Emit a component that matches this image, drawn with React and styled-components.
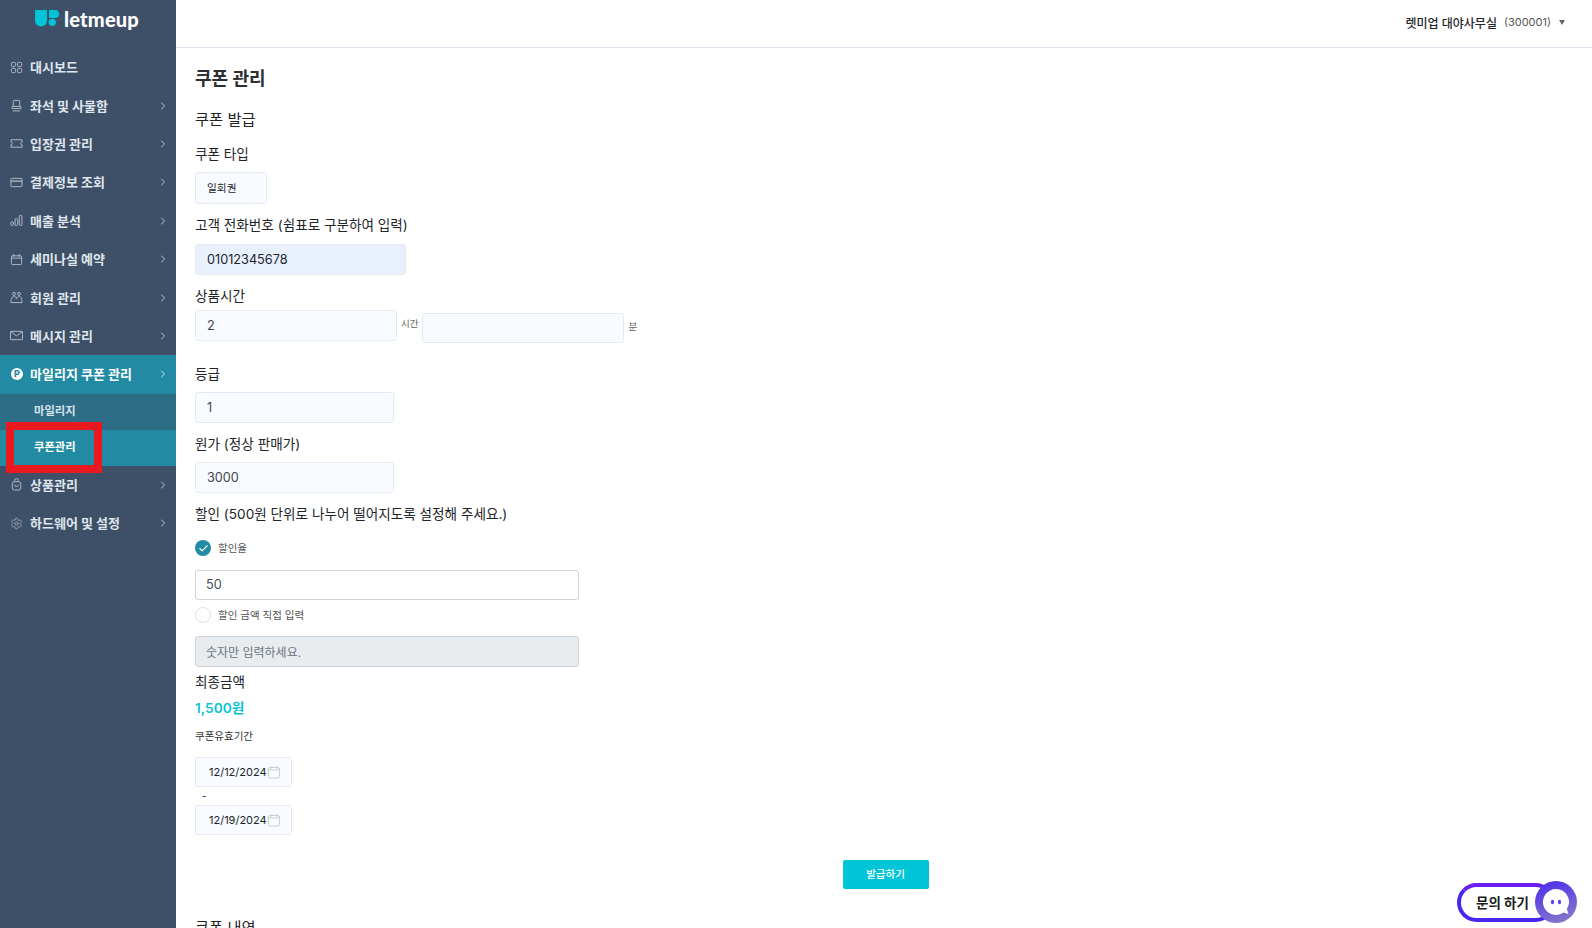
import React from 'react';
import styled, { createGlobalStyle } from 'styled-components';
import { ChevronRight, Settings, Check } from 'lucide-react';

const GlobalStyle = createGlobalStyle`
	html, body {
		margin: 0;
		height: 100%;
		overflow: hidden;
		background: #fff;
		font-family: Inter, "Noto Sans CJK KR", sans-serif;
		color: #212529;
	}
	* { box-sizing: border-box; }
`;

const Layout = styled.div`
	display: flex;
	width: 1592px;
	height: 928px;
	overflow: hidden;
`;

const Sidebar = styled.aside`
	width: 176px;
	flex-shrink: 0;
	background: #3e5068;
	color: #dfe5ec;
`;

const LogoRow = styled.div`
	height: 48px;
	padding: 3px 0 14px 35px;
	display: flex;
	align-items: center;
	gap: 5px;
`;

const LogoText = styled.span`
	font-family: Lato, sans-serif;
	font-size: 20px;
	font-weight: 900;
	color: #fff;
	letter-spacing: 0.2px;
`;

const MenuRow = styled.div`
	height: 38.4px;
	padding: 0 7px 0 10px;
	display: flex;
	align-items: center;
	gap: 7px;
	font-size: 13px;
	font-weight: 700;
	background: ${(p) => (p.$active ? '#228ba3' : 'transparent')};
	color: ${(p) => (p.$active ? '#fff' : '#dfe5ec')};

	& > svg:first-child { flex-shrink: 0; opacity: 0.75; }
	& > span { flex: 1; margin-top: -1px; }
`;

const SubRow = styled.div`
	height: 36px;
	padding: 0 0 3px 34px;
	display: flex;
	align-items: center;
	font-size: 11.3px;
	font-weight: 700;
	background: ${(p) => (p.$active ? '#228ba3' : '#2d6d85')};
	color: ${(p) => (p.$active ? '#fff' : '#d5e3ea')};
`;

const SubWrap = styled.div`
	position: relative;
`;

const RedMark = styled.div`
	position: absolute;
	left: 6px;
	top: 28px;
	width: 96px;
	height: 51px;
	border: 8px solid #e8191f;
`;

const PointBadge = styled.span`
	flex: 0 0 12px !important;
	width: 12px;
	height: 12px;
	margin: 0 0 0 1px !important;
	border-radius: 50%;
	background: #fff;
	color: #228ba3;
	font-size: 9px;
	font-weight: 800;
	line-height: 12px;
	text-align: center;
`;

const Main = styled.div`
	flex: 1;
	min-width: 0;
`;

const Topbar = styled.header`
	height: 48px;
	padding: 0 27px 3px 0;
	border-bottom: 1px solid #e1e4ee;
	display: flex;
	align-items: center;
	justify-content: flex-end;
	gap: 7px;
	font-size: 12px;
	font-weight: 500;
`;

const BranchCode = styled.span`
	font-weight: 400;
	font-size: 11px;
	color: #555;
`;

const Caret = styled.span`
	width: 0;
	height: 0;
	margin-left: 1px;
	border-left: 3.5px solid transparent;
	border-right: 3.5px solid transparent;
	border-top: 5px solid #666;
`;

const Content = styled.main`
	padding: 18px 0 0 19px;
	position: relative;
`;

const PageTitle = styled.h1`
	margin: 0;
	height: 25px;
	line-height: 25px;
	font-size: 18px;
	font-weight: 700;
	color: #2b2f33;
`;

const SectionTitle = styled.h2`
	margin: 17px 0 0;
	height: 24px;
	line-height: 24px;
	font-size: 15.3px;
	font-weight: 400;
	color: #212529;
`;

const Label = styled.div`
	margin-top: ${(p) => p.$top || 0}px;
	height: 22px;
	line-height: 22px;
	font-size: 13.6px;
	font-weight: 400;
	color: #212529;
`;

const Field = styled.div`
	width: ${(p) => p.$w}px;
	height: ${(p) => p.$h || 31}px;
	margin-top: ${(p) => p.$top || 0}px;
	padding: 0 0 1px ${(p) => p.$pad || 11}px;
	display: flex;
	align-items: center;
	font-size: ${(p) => p.$size || 12.7}px;
	color: ${(p) => p.$color || '#3f454b'};
	background: ${(p) => p.$bg || '#f8fbff'};
	border: 1px solid ${(p) => p.$line || '#e6e9ee'};
	border-radius: 3px;
	flex-shrink: 0;
`;

const TimeRow = styled.div`
	display: flex;
	margin-top: 3px;
	height: 43px;
`;

const Unit = styled.span`
	margin: ${(p) => p.$top}px 4px 0 4px;
	font-size: 9.5px;
	line-height: 12px;
	color: #666;
`;

const ShiftedField = styled(Field)`
	margin-top: 3px;
`;

const OptionRow = styled.div`
	height: ${(p) => p.$h}px;
	margin-top: ${(p) => p.$top}px;
	display: flex;
	align-items: center;
	gap: 7px;
	font-size: 10.5px;
	color: #555;
`;

const OptionText = styled.span`
	margin-top: -2px;
`;

const Circle = styled.span`
	width: 16px;
	height: 16px;
	border-radius: 50%;
	display: flex;
	align-items: center;
	justify-content: center;
	color: #fff;
	background: ${(p) => (p.$checked ? '#228ba3' : '#fff')};
	border: ${(p) => (p.$checked ? 'none' : '1px solid #dee2e6')};
`;

const Amount = styled.div`
	margin-top: 4px;
	height: 22px;
	line-height: 22px;
	font-size: 13.7px;
	font-weight: 600;
	color: #0cc3d3;
`;

const SmallLabel = styled.div`
	margin-top: 9px;
	height: 18px;
	line-height: 18px;
	font-size: 10.5px;
	font-weight: 400;
	color: #333;
`;

const DateBox = styled(Field)`
	width: 97px;
	height: 30px;
	padding-left: 13px;
	font-size: 11px;
	color: #212529;
`;

const Dash = styled.div`
	height: 18px;
	padding: 2px 0 0 7px;
	font-size: 10px;
	line-height: 14px;
`;

const SubmitRow = styled.div`
	width: 1381px;
	margin-top: 25px;
	display: flex;
	justify-content: center;
`;

const SubmitButton = styled.button`
	width: 86px;
	height: 29px;
	padding: 0 0 2px;
	border: none;
	border-radius: 2px;
	background: #00c5d8;
	color: #fff;
	font-family: inherit;
	font-size: 10.5px;
	font-weight: 500;
`;

const HistoryTitle = styled(SectionTitle)`
	margin-top: 27px;
`;

const ChatButton = styled.div`
	position: fixed;
	left: 1457px;
	top: 883px;
	width: 98px;
	height: 39px;
	padding: 0 0 2px 15px;
	display: flex;
	align-items: center;
	border: 4px solid #4a26f0;
	border-top-color: #6a1ff0;
	border-radius: 20px;
	background: #fff;
	font-size: 13.5px;
	font-weight: 700;
	color: #1b1b1b;
`;

const ChatBubble = styled.div`
	position: fixed;
	left: 1535px;
	top: 881px;
	width: 42px;
	height: 42px;
	border-radius: 50%;
	background: linear-gradient(160deg, #4a2bf0, #8c7fc4);
	display: flex;
	align-items: center;
	justify-content: center;
`;

// 메뉴 아이콘
const Glyph = ({ children }) => (
	<svg width="13" height="13" viewBox="0 0 14 14" fill="none" stroke="currentColor" strokeWidth="1">
		{children}
	</svg>
);

const GridIcon = () => (
	<Glyph>
		<rect x="1.5" y="1.5" width="4.5" height="4.5" rx="1.2" />
		<rect x="8" y="1.5" width="4.5" height="4.5" rx="1.2" />
		<rect x="1.5" y="8" width="4.5" height="4.5" rx="1.2" />
		<rect x="8" y="8" width="4.5" height="4.5" rx="1.2" />
	</Glyph>
);

const SeatIcon = () => (
	<Glyph>
		<path d="M3.5 8V2.5a1 1 0 0 1 1-1h5a1 1 0 0 1 1 1V8" />
		<rect x="2" y="8" width="10" height="2.2" rx="0.6" />
		<path d="M3 12.8h8" />
	</Glyph>
);

const TicketIcon = () => (
	<Glyph>
		<path d="M1 3h12v2.5a1.5 1.5 0 0 0 0 3V11H1V8.5a1.5 1.5 0 0 0 0-3z" />
	</Glyph>
);

const CardIcon = () => (
	<Glyph>
		<rect x="1" y="2.5" width="12" height="9" rx="1" />
		<path d="M1 5.5h12" strokeWidth="1.4" />
	</Glyph>
);

const BarsIcon = () => (
	<Glyph>
		<rect x="1" y="8.5" width="2.8" height="3.8" rx="1" />
		<rect x="5.5" y="5" width="2.8" height="7.3" rx="1" />
		<rect x="10" y="1.5" width="2.8" height="10.8" rx="1" />
	</Glyph>
);

const CalendarGlyph = () => (
	<Glyph>
		<rect x="1.5" y="3" width="11" height="9.5" rx="1.2" />
		<path d="M4 1v3M10 1v3M1.5 5.5h11" />
	</Glyph>
);

const PeopleIcon = () => (
	<Glyph>
		<circle cx="4.3" cy="3" r="1.6" />
		<circle cx="9.7" cy="3" r="1.6" />
		<path d="M1 12.5c0-3 1-7 3.3-7 1.3 0 2.2 1.3 2.7 3 .5-1.7 1.4-3 2.7-3 2.3 0 3.3 4 3.3 7z" />
	</Glyph>
);

const MailIcon = () => (
	<Glyph>
		<rect x="0.5" y="2.5" width="13" height="9" rx="0.6" />
		<path d="M1 3l6 4.5L13 3" />
	</Glyph>
);

const BagIcon = () => (
	<Glyph>
		<rect x="2.5" y="4" width="9" height="9" rx="2.2" />
		<path d="M5 4V2.6a2 2 0 0 1 4 0V4M5 7.2a2 2 0 0 0 4 0" />
	</Glyph>
);

const GearIcon = () => <Settings size={13} strokeWidth={1.25} />;

const menuTop = [
	{ label: '대시보드', Icon: GridIcon, bare: true },
	{ label: '좌석 및 사물함', Icon: SeatIcon },
	{ label: '입장권 관리', Icon: TicketIcon },
	{ label: '결제정보 조회', Icon: CardIcon },
	{ label: '매출 분석', Icon: BarsIcon },
	{ label: '세미나실 예약', Icon: CalendarGlyph },
	{ label: '회원 관리', Icon: PeopleIcon },
	{ label: '메시지 관리', Icon: MailIcon },
];

const menuBottom = [
	{ label: '상품관리', Icon: BagIcon },
	{ label: '하드웨어 및 설정', Icon: GearIcon },
];

const LogoMark = () => (
	<svg width="24" height="17" viewBox="0 0 24 17" fill="#00c5d8">
		<path d="M0 0h12v10.5a6 6 0 0 1-12 0z" />
		<path d="M14 0h6a4 4 0 0 1 0 8h-6z" />
		<circle cx="17.3" cy="12.3" r="3.6" />
	</svg>
);

const MenuItem = ({ item }) => (
	<MenuRow>
		<item.Icon />
		<span>{item.label}</span>
		{!item.bare && <ChevronRight size={12} strokeWidth={1.5} />}
	</MenuRow>
);

const DateIcon = () => (
	<svg width="14" height="14" viewBox="0 0 14 14" fill="none" stroke="#c9ced4" strokeWidth="1">
		<rect x="1.5" y="2.5" width="11" height="10.5" rx="1.5" />
		<path d="M4 1v3M10 1v3M1.5 5h11" />
	</svg>
);

const App = () => {
	return (
		<Layout>
			<GlobalStyle />
			<Sidebar>
				<LogoRow>
					<LogoMark />
					<LogoText>letmeup</LogoText>
				</LogoRow>
				{menuTop.map((item) => (
					<MenuItem key={item.label} item={item} />
				))}
				<MenuRow $active>
					<PointBadge>P</PointBadge>
					<span>마일리지 쿠폰 관리</span>
					<ChevronRight size={12} strokeWidth={1.5} />
				</MenuRow>
				<SubWrap>
					<SubRow>마일리지</SubRow>
					<SubRow $active>쿠폰관리</SubRow>
					<RedMark />
				</SubWrap>
				{menuBottom.map((item) => (
					<MenuItem key={item.label} item={item} />
				))}
			</Sidebar>
			<Main>
				<Topbar>
					<span>렛미업 대야사무실</span>
					<BranchCode>(300001)</BranchCode>
					<Caret />
				</Topbar>
				<Content>
					<PageTitle>쿠폰 관리</PageTitle>
					<SectionTitle>쿠폰 발급</SectionTitle>
					<Label $top={11}>쿠폰 타입</Label>
					<Field $w={72} $h={32} $top={7} $color="#212529" $size={10.7}>일회권</Field>
					<Label $top={10}>고객 전화번호 (쉼표로 구분하여 입력)</Label>
					<Field $w={211} $top={8} $bg="#e8f0fe" $color="#212529">01012345678</Field>
					<Label $top={10}>상품시간</Label>
					<TimeRow>
						<Field $w={202}>2</Field>
						<Unit $top={8}>시간</Unit>
						<ShiftedField $w={202} $h={30} />
						<Unit $top={11}>분</Unit>
					</TimeRow>
					<Label $top={10}>등급</Label>
					<Field $w={199} $top={7}>1</Field>
					<Label $top={10}>원가 (정상 판매가)</Label>
					<Field $w={199} $top={7}>3000</Field>
					<Label $top={10}>할인 (500원 단위로 나누어 떨어지도록 설정해 주세요.)</Label>
					<OptionRow $h={16} $top={15}>
						<Circle $checked><Check size={11} strokeWidth={2.5} /></Circle>
						<OptionText>할인율</OptionText>
					</OptionRow>
					<Field $w={384} $h={30} $top={14} $pad={10} $bg="#fff" $line="#ced4da" $color="#495057">50</Field>
					<OptionRow $h={16} $top={7}>
						<Circle />
						<OptionText>할인 금액 직접 입력</OptionText>
					</OptionRow>
					<Field $w={384} $top={13} $pad={10} $size={12} $bg="#e9ecef" $line="#ced4da" $color="#6c757d">숫자만 입력하세요.</Field>
					<Label $top={4}>최종금액</Label>
					<Amount>1,500원</Amount>
					<SmallLabel>쿠폰유효기간</SmallLabel>
					<DateBox $top={11}>12/12/2024<DateIcon /></DateBox>
					<Dash>-</Dash>
					<DateBox>12/19/2024<DateIcon /></DateBox>
					<SubmitRow>
						<SubmitButton>발급하기</SubmitButton>
					</SubmitRow>
					<HistoryTitle>쿠폰 내역</HistoryTitle>
				</Content>
			</Main>
			<ChatButton>문의 하기</ChatButton>
			<ChatBubble>
				<svg width="30" height="30" viewBox="0 0 30 30">
					<path d="M15 2a13 13 0 1 0 7.5 23.6l5 1.4-1.6-5A13 13 0 0 0 15 2z" fill="#fff" />
					<ellipse cx="11.5" cy="15" rx="1.6" ry="2.3" fill="#5a3ff0" />
					<ellipse cx="18.5" cy="15" rx="1.6" ry="2.3" fill="#5a3ff0" />
				</svg>
			</ChatBubble>
		</Layout>
	);
};

export default App;
